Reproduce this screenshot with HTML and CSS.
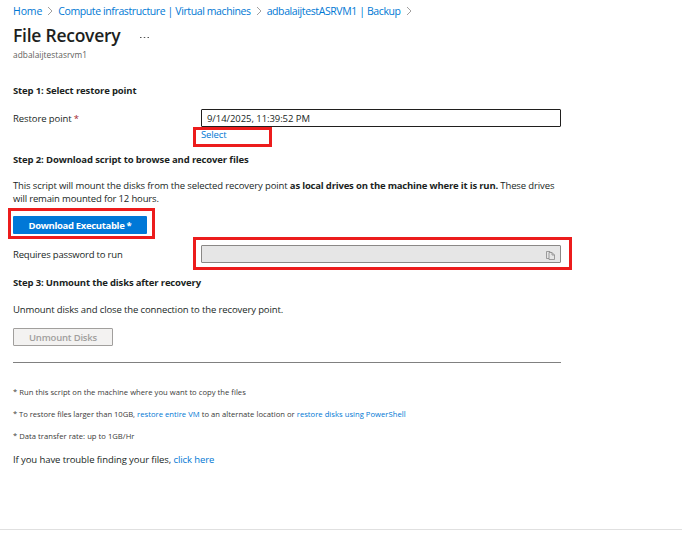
FILE: index.html
```html
<!DOCTYPE html>
<html lang="en">
<head>
<meta charset="utf-8">
<title>File Recovery</title>
<link rel="stylesheet" href="styles.css">
</head>
<body>
<main class="blade">
  <nav class="crumbs">
    <a class="crumb-home">Home</a>
    <svg class="chev" viewBox="0 0 6 10"><path d="M1 1l4 4-4 4"/></svg>
    <a>Compute infrastructure | Virtual machines</a>
    <svg class="chev" viewBox="0 0 6 10"><path d="M1 1l4 4-4 4"/></svg>
    <a>adbalaijtestASRVM1 | Backup</a>
    <svg class="chev" viewBox="0 0 6 10"><path d="M1 1l4 4-4 4"/></svg>
  </nav>
  <header class="heading"><h1>File Recovery</h1><svg class="more" viewBox="0 0 9 2"><path d="M0 .5h1.5M3.75 .5h1.5M7.5 .5h1.5"/></svg></header>
  <p class="subtitle">adbalaijtestasrvm1</p>

  <h2 class="step step-1">Step 1: Select restore point</h2>
  <div class="field field-restore">
    <label>Restore point <span class="required">*</span></label>
    <div class="input"><span class="date">9/14/2025, 11:39:52 PM</span></div>
  </div>
  <div class="select-row"><a class="select">Select</a><i class="mark mark-select"></i></div>

  <h2 class="step step-2">Step 2: Download script to browse and recover files</h2>
  <p class="mount">This script will mount the disks from the selected recovery point <b>as local drives on the machine where it is run.</b> These drives<br><span class="mount-end">will remain mounted for 12 hours.</span></p>
  <div class="download-row"><button class="primary">Download Executable *</button><i class="mark mark-download"></i></div>
  <div class="field field-password">
    <label>Requires password to run</label>
    <div class="input readonly">
      <svg class="copy" viewBox="0 0 9 9"><path d="M3 7.5H.5V.5H4L5 1.5M3 1.5H6L8.5 4V8.5H3ZM6 1.5V4H8.5"/></svg>
    </div>
    <i class="mark mark-password"></i>
  </div>

  <h2 class="step step-3">Step 3: Unmount the disks after recovery</h2>
  <p class="unmount-text">Unmount disks and close the connection to the recovery point.</p>
  <button class="disabled" disabled>Unmount Disks</button>
  <hr>
  <p class="note note-run">* Run this script on the machine where you want to copy the files</p>
  <p class="note"><span class="note-lead">* To restore files larger than 10GB,</span> <a>restore entire VM</a> to an alternate location or <a>restore disks using PowerShell</a></p>
  <p class="note">* Data transfer rate: up to 1GB/Hr</p>
  <p class="trouble">If you have trouble finding your files, <a>click here</a></p>
</main>
<footer class="footer"></footer>
</body>
</html>
```

FILE: styles.css
```css
* { box-sizing: border-box; }
body { margin: 0; height: 545px; overflow: hidden; display: flex; flex-direction: column; background: #fff; color: #201f1e; font: 9.5px/14px "Open Sans", "Noto Sans", sans-serif; letter-spacing: -.12px; }
.blade { width: 561px; height: 529px; padding-left: 13px; white-space: nowrap; }
h1, h2, p { margin: 0; font-size: inherit; }
a { color: #0078d4; }
.crumbs { display: flex; align-items: center; height: 22px; font-size: 10.5px; letter-spacing: -.39px; }
.crumb-home { letter-spacing: -.1px; }
.chev { width: 6px; height: 10px; margin: 0 5px; fill: none; stroke: #8a8886; stroke-width: .8; }
.heading { display: flex; align-items: center; height: 27px; }
h1 { font-size: 17.5px; line-height: 27px; font-weight: 600; letter-spacing: -.25px; }
.more { width: 9px; height: 2px; margin: 4px 0 0 20px; stroke: #555; stroke-width: 1; }
.subtitle { height: 12px; line-height: 12px; font-size: 8.3px; letter-spacing: .04px; color: #605e5c; }
.step { font-weight: 700; height: 14px; letter-spacing: -.13px; }
.step-1 { margin-top: 23px; }
.field { position: relative; display: grid; grid-template-columns: 188px 360px; height: 18px; line-height: 20px; }
.field-restore { margin-top: 11px; }
.field-restore label { letter-spacing: -.09px; }
.required { color: #a4262c; }
.input { display: flex; align-items: center; height: 18px; padding-left: 5px; border: 1px solid #201f1e; border-radius: 1px; }
.date { padding-top: 2px; letter-spacing: -.06px; }
.select-row { position: relative; height: 19px; padding-left: 188px; line-height: 15px; }
.mark { position: absolute; border: 3px solid #ec1c1c; }
.mark-select { left: 180px; top: 0; width: 79px; height: 20px; }
.step-2 { margin-top: 7px; }
.mount { margin-top: 12px; height: 26px; line-height: 13px; }
.mount b { letter-spacing: -.19px; }
.mount-end { letter-spacing: -.16px; }
.download-row { position: relative; height: 18px; margin-top: 11px; }
button { display: block; height: 18px; padding: 2px 0 0; font: 700 9.5px/16px "Open Sans", sans-serif; letter-spacing: -.33px; border-radius: 1px; }
.primary { width: 134px; border: 0; background: #0078d7; color: #fff; }
.mark-download { left: -5px; top: -8px; width: 147px; height: 31px; }
.field-password { margin-top: 11px; letter-spacing: -.18px; }
.readonly { justify-content: flex-end; padding-right: 5px; background: #e6e6e6; border-color: #8a8886; }
.copy { width: 9px; height: 9px; margin-top: 3px; fill: none; stroke: #888; stroke-width: .8; }
.mark-password { left: 180px; top: -8px; width: 379px; height: 33px; }
.step-3 { margin-top: 13px; letter-spacing: -.16px; }
.unmount-text { margin-top: 13px; }
.disabled { width: 100px; margin-top: 11px; padding-top: 1px; font-weight: 600; letter-spacing: -.2px; border: 1px solid #a19f9d; background: #f3f2f1; color: #a19f9d; }
hr { margin: 16px 0 0; height: 1px; border: 0; background: #808080; }
.note { height: 22px; line-height: 22px; font-size: 7.65px; letter-spacing: .02px; color: #3b3a39; }
.note-lead { letter-spacing: -.04px; }
.note-run { margin-top: 18px; }
.trouble { margin-top: 6px; letter-spacing: -.09px; }
.footer { height: 1px; background: #e0e0e0; }
```
